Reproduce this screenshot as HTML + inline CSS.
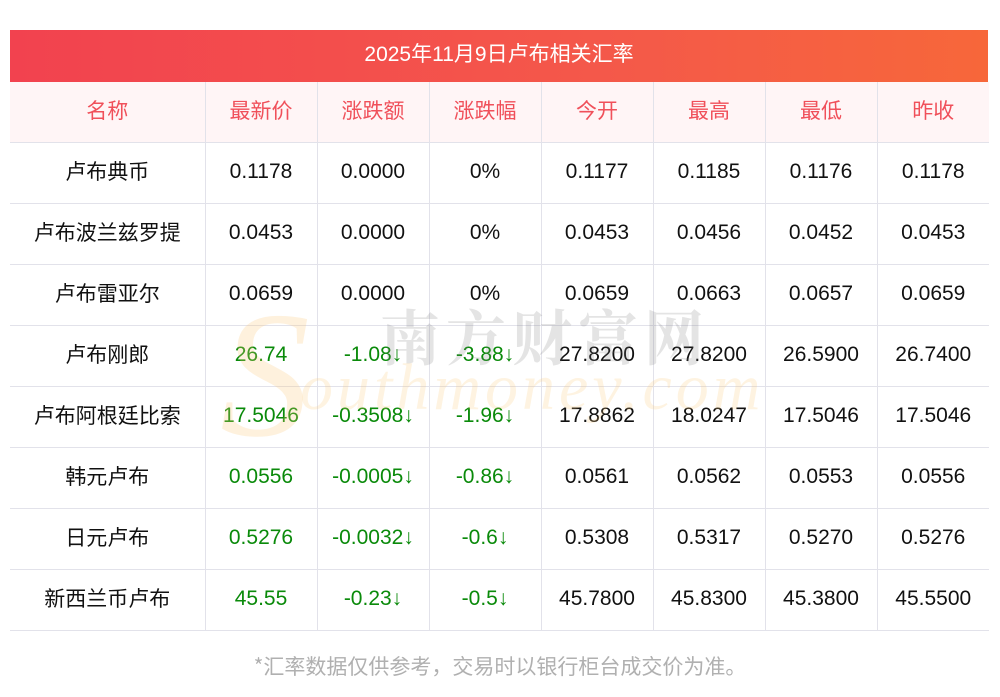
<!DOCTYPE html>
<html><head><meta charset="utf-8"><style>
body{margin:0;background:#fff;width:1000px;height:697px;position:relative;overflow:hidden;font-family:"Liberation Sans","Noto Sans CJK SC",sans-serif;}
.title{position:absolute;left:10px;top:30px;width:978px;height:52px;background:linear-gradient(90deg,#f2424f,#f4584a 60%,#f7673a);color:#fff;font-size:21px;text-align:center;line-height:50px;font-family:"Liberation Sans","Noto Sans CJK SC",sans-serif;}
table{position:absolute;left:10px;top:82px;border-collapse:collapse;width:979px;}
td{border:1px solid #e2e2ea;text-align:center;font-size:21px;color:#111;height:61px;padding:0 0 1px 0;box-sizing:border-box;line-height:24px;}
td.c{font-family:"Noto Sans CJK SC",sans-serif;font-size:21px;padding-bottom:4px;}
tr td:first-child{border-left:none;}
tr td:last-child{border-right:none;}
tr.h td{height:60px;background:#fff5f6;color:#f0505a;border-top:none;font-family:"Noto Sans CJK SC",sans-serif;padding-bottom:4px;}
.g{color:#0a8a0a;}
.foot{position:absolute;top:651px;left:0;width:1000px;text-align:center;font-size:21px;color:#b0b0b0;font-family:"Noto Sans CJK SC",sans-serif;}
.wm{position:absolute;left:380px;top:292px;font-size:60px;color:rgba(120,120,120,0.2);letter-spacing:6px;font-family:"Noto Serif CJK SC",serif;font-weight:bold;}
.wm2{position:absolute;left:300px;top:350px;font-size:66px;color:rgba(252,200,120,0.22);font-family:"Liberation Serif",serif;font-style:italic;letter-spacing:4px;}
.s{position:absolute;left:220px;top:285px;font-size:180px;color:rgba(252,200,120,0.25);font-family:"Liberation Serif",serif;font-style:italic;line-height:1;}
</style></head><body>
<div class="title">2025年11月9日卢布相关汇率</div>
<table>
<colgroup><col style="width:195px"><col style="width:112px"><col style="width:112px"><col style="width:112px"><col style="width:112px"><col style="width:112px"><col style="width:112px"><col style="width:112px"></colgroup>
<tr class="h"><td>名称</td><td>最新价</td><td>涨跌额</td><td>涨跌幅</td><td>今开</td><td>最高</td><td>最低</td><td>昨收</td></tr>
<tr><td class="c">卢布典币</td><td>0.1178</td><td>0.0000</td><td>0%</td><td>0.1177</td><td>0.1185</td><td>0.1176</td><td>0.1178</td></tr>
<tr><td class="c">卢布波兰兹罗提</td><td>0.0453</td><td>0.0000</td><td>0%</td><td>0.0453</td><td>0.0456</td><td>0.0452</td><td>0.0453</td></tr>
<tr><td class="c">卢布雷亚尔</td><td>0.0659</td><td>0.0000</td><td>0%</td><td>0.0659</td><td>0.0663</td><td>0.0657</td><td>0.0659</td></tr>
<tr><td class="c">卢布刚郎</td><td class="g">26.74</td><td class="g">-1.08↓</td><td class="g">-3.88↓</td><td>27.8200</td><td>27.8200</td><td>26.5900</td><td>26.7400</td></tr>
<tr><td class="c">卢布阿根廷比索</td><td class="g">17.5046</td><td class="g">-0.3508↓</td><td class="g">-1.96↓</td><td>17.8862</td><td>18.0247</td><td>17.5046</td><td>17.5046</td></tr>
<tr><td class="c">韩元卢布</td><td class="g">0.0556</td><td class="g">-0.0005↓</td><td class="g">-0.86↓</td><td>0.0561</td><td>0.0562</td><td>0.0553</td><td>0.0556</td></tr>
<tr><td class="c">日元卢布</td><td class="g">0.5276</td><td class="g">-0.0032↓</td><td class="g">-0.6↓</td><td>0.5308</td><td>0.5317</td><td>0.5270</td><td>0.5276</td></tr>
<tr><td class="c">新西兰币卢布</td><td class="g">45.55</td><td class="g">-0.23↓</td><td class="g">-0.5↓</td><td>45.7800</td><td>45.8300</td><td>45.3800</td><td>45.5500</td></tr>
</table>
<div class="s">S</div>
<div class="wm">南方财富网</div>
<div class="wm2">outhmoney.com</div>
<div class="foot">*汇率数据仅供参考，交易时以银行柜台成交价为准。</div>
</body></html>
